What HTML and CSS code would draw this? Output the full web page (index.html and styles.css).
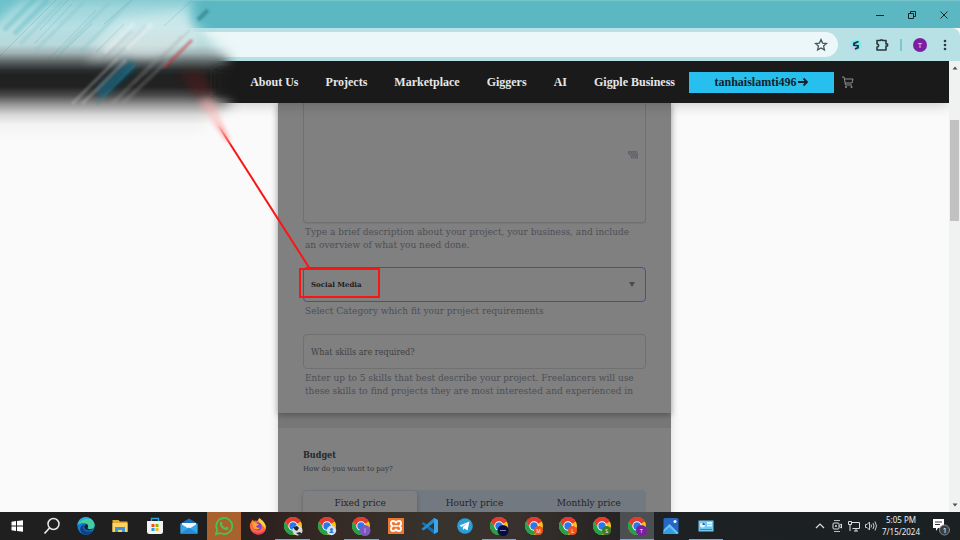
FILE: index.html
```
<!DOCTYPE html>
<html lang="en">
<head>
<meta charset="utf-8">
<meta name="viewport" content="width=device-width, initial-scale=1">
<title>Gigple - Post a project</title>
<link rel="stylesheet" href="styles.css">
</head>
<body>
<svg class="defs" aria-hidden="true">
  <defs>
    <symbol id="chrome" viewBox="0 0 20 20">
      <circle cx="10" cy="10" r="9" fill="#fbc116"/>
      <path d="M10 10 2.2 5.5A9 9 0 0 1 17.8 5.5Z" fill="#e33b2e"/>
      <path d="M10 5.5h7.8A9 9 0 0 0 2.2 5.5L6 12Z" fill="#e33b2e"/>
      <path d="M2.2 5.5A9 9 0 0 0 10 19l4-6.8-8 0Z" fill="#27a04b"/>
      <circle cx="10" cy="10" r="4.7" fill="#fff"/>
      <circle cx="10" cy="10" r="3.7" fill="#2878ec"/>
    </symbol>
  </defs>
</svg>

<div class="titlebar">
  <button class="win" aria-label="Minimize"><svg viewBox="0 0 12 12"><path d="M2 6.500h8"/></svg></button>
  <button class="win" aria-label="Restore"><svg viewBox="0 0 12 12"><path d="M2.500 4.500h5v5h-5zM4.500 4.500v-2h5v5h-2"/></svg></button>
  <button class="win" aria-label="Close"><svg viewBox="0 0 12 12"><path d="M2.500 2.500l7 7M9.500 2.500l-7 7"/></svg></button>
</div>

<div class="toolbar">
  <div class="address">
    <button class="tool" aria-label="Bookmark"><svg viewBox="0 0 16 16"><path d="M8 2.600l1.600 3.500 3.900.4-2.900 2.600.8 3.800L8 11l-3.400 1.900.8-3.800-2.900-2.600 3.900-.4z" fill="none" stroke="#4a5658" stroke-width="1.300"/></svg></button>
  </div>
  <button class="tool ext" aria-label="Extension"><svg viewBox="0 0 16 16"><circle cx="8" cy="8" r="5.500" fill="#7feaf2"/><path d="M3 10a5.500 5.500 0 0 0 5 3.500L8 8z" fill="#d4c2f4"/><path d="M10.500 4.500L6 6.300v2l4 .4v2L7 12" fill="none" stroke="#143238" stroke-width="1.800"/></svg></button>
  <button class="tool puzzle" aria-label="Extensions"><svg viewBox="0 0 16 16"><path d="M3 3.500h3.500V3h2v.5H12V7h1.500v2H12v4H3v-3c2.200 0 2.200-3 0-3z" fill="none" stroke="#26383a" stroke-width="1.600" stroke-linejoin="round"/></svg></button>
  <span class="divider"></span>
  <button class="avatar" aria-label="Profile">T</button>
  <button class="tool dots" aria-label="Menu"><svg viewBox="0 0 16 16"><g fill="#2c3b3d"><circle cx="8" cy="4" r="1.300"/><circle cx="8" cy="8" r="1.300"/><circle cx="8" cy="12" r="1.300"/></g></svg></button>
</div>

<div class="viewport">
  <div class="page">
    <header class="site-header">
      <nav class="nav">
        <a href="#">About Us</a>
        <a href="#">Projects</a>
        <a href="#">Marketplace</a>
        <a href="#">Giggers</a>
        <a href="#">AI</a>
        <a href="#">Gigple Business</a>
      </nav>
      <button class="account">tanhaislamti496<svg viewBox="0 0 12 10"><path d="M1 5h9M6.500 1.500L10 5 6.500 8.500" fill="none" stroke="#10222b" stroke-width="1.800"/></svg></button>
      <a class="cart" href="#" aria-label="Cart"><svg viewBox="0 0 14 14"><path d="M1 2h2l1.500 8H11M3.300 4H12l-1 4H4" fill="none" stroke="#8b8e96" stroke-width="1"/><circle cx="5" cy="12" r="1" fill="#8b8e96"/><circle cx="10.500" cy="12" r="1" fill="#8b8e96"/></svg></a>
    </header>

    <main class="form-column">
      <form class="form">
        <section class="card details">
          <div class="area">
            <textarea id="desc" aria-label="Project description"></textarea>
            <svg class="keys" viewBox="0 0 10 8" aria-hidden="true"><path d="M0 0h9v1.500h1V7.500H3V5.500H2V3.500H0z" fill="#63656a"/><path d="M2 2h7M3 4h6M4 6h5" stroke="#7d7d7f" stroke-dasharray="1 1"/></svg>
          </div>
          <label class="help" for="desc">Type a brief description about your project, your business, and include<br>an overview of what you need done.</label>
          <div class="select-wrap">
            <select id="category"><option>Social Media</option></select>
            <svg class="caret" viewBox="0 0 6 5" aria-hidden="true"><path d="M0 0h6L3 5z" fill="#4b4b4d"/></svg>
            <svg class="callout" viewBox="0 0 200 200" aria-hidden="true">
              <defs>
                <linearGradient id="tail" gradientUnits="userSpaceOnUse" x1="30" y1="8" x2="57" y2="51"><stop offset="0" stop-color="#f99" stop-opacity="0"/><stop offset=".5" stop-color="#ff8080" stop-opacity=".4"/><stop offset="1" stop-color="#fa1515" stop-opacity=".5"/></linearGradient>
                <linearGradient id="start" gradientUnits="userSpaceOnUse" x1="44" y1="30" x2="57" y2="51"><stop offset="0" stop-color="#fa1515" stop-opacity="0"/><stop offset="1" stop-color="#fa1515"/></linearGradient>
                <filter id="haze"><feGaussianBlur stdDeviation="2"/></filter>
              </defs>
              <path d="M22 8L38 4 56 46 53 46z" fill="url(#tail)" filter="url(#haze)"/>
              <path d="M44 30L136 174" fill="none" stroke="url(#start)" stroke-width="2"/>
              <path d="M126 174h79v28h-79z" fill="none" stroke="#fa1515" stroke-width="2"/>
            </svg>
          </div>
          <label class="help" for="category">Select Category which fit your project requirements</label>
          <input id="skills" class="skills" type="text" placeholder="What skills are required?">
          <label class="help" for="skills">Enter up to 5 skills that best describe your project. Freelancers will use<br>these skills to find projects they are most interested and experienced in</label>
        </section>
        <section class="card budget">
          <h2>Budget</h2>
          <p>How do you want to pay?</p>
          <div class="tabs">
            <button type="button" class="tab on">Fixed price</button>
            <button type="button" class="tab">Hourly price</button>
            <button type="button" class="tab">Monthly price</button>
          </div>
        </section>
      </form>
    </main>
  </div>
  <div class="scrollbar" aria-hidden="true">
    <svg viewBox="0 0 10 10"><path d="M2.500 6.500h5L5 3.500z" fill="#505050"/></svg>
    <span class="thumb"></span>
    <svg viewBox="0 0 10 10"><path d="M2.500 3.500h5L5 6.500z" fill="#505050"/></svg>
  </div>
</div>

<footer class="taskbar">
  <div class="apps">
    <button aria-label="Start"><svg viewBox="0 0 20 20"><path d="M4.500 5.700l4.500-.6v4.400H4.500zM10 5l6-.8v5.300h-6zM4.500 10.500H9v4.400l-4.500-.6zM10 10.500h6v5.300l-6-.8z" fill="#fff"/></svg></button>
    <button aria-label="Search"><svg viewBox="0 0 20 20"><circle cx="11.500" cy="8" r="5.500" fill="none" stroke="#e8e8e8" stroke-width="1.500"/><path d="M7.500 12l-5 5.500" stroke="#e8e8e8" stroke-width="1.700"/></svg></button>
    <button aria-label="Edge"><svg viewBox="0 0 20 20"><circle cx="10" cy="10" r="8.700" fill="#147bd1"/><path d="M1.500 9C3-.5 16-1 18.500 8c1 4.500-4 6-7 4.500 2-3 0-5.500-4-5.500-3 0-5 1-6 2z" fill="#43cfa0"/><path d="M1.500 9C3-.5 12 0 15 3 8 2 5 4 1.500 9z" fill="#26a9df"/><path d="M8 8.500c-2.500 5 2.500 9 9.500 6-3 5-10 5.500-12.500 1.500-2-3.500 0-7 3-7.500z" fill="#123f86"/><path d="M10.500 8c2 1 2 3 .8 4.300 2 1.300 5 1 6.200-.3-1 2.500-6.500 3.500-8.500 1-1.500-2-.5-4.500 1.500-5z" fill="#1d232a"/></svg></button>
    <button aria-label="File Explorer"><svg viewBox="0 0 20 20"><path d="M2.500 4h6l1.500 1.500h7.500V16h-15z" fill="#e9a92c"/><path d="M2.500 7h15v9h-15z" fill="#fbd468"/><path d="M5 16v-5h10v5h-3v-2H8v2z" fill="#3b94dc"/></svg></button>
    <button aria-label="Store"><svg viewBox="0 0 20 20"><path d="M6.500 5V2.500h7V5" fill="none" stroke="#2ba5d8" stroke-width="1.400"/><path d="M2 5h16v10.500q0 2.500-2.500 2.500h-11Q2 18 2 15.500z" fill="#f2f2f2"/><path d="M6.500 8h3v3h-3z" fill="#ef5125"/><path d="M10.500 8h3v3h-3z" fill="#7fb900"/><path d="M6.500 12h3v3h-3z" fill="#18a3ea"/><path d="M10.500 12h3v3h-3z" fill="#fcb813"/></svg></button>
    <button aria-label="Mail"><svg viewBox="0 0 20 20"><path d="M1.500 7.500L10 2.500l8.500 5v10h-17z" fill="#1770b8"/><path d="M3 7h14v6H3z" fill="#f5f9fc"/><path d="M1.500 7.500L10 13l8.500-5.500v10h-17z" fill="#36a6e8"/><path d="M1.500 17.500L10 11.500l8.500 6z" fill="#258dd8"/></svg></button>
    <button class="alert" aria-label="WhatsApp"><svg viewBox="0 0 20 20"><path d="M2 18.200l1.200-4.400a8 8 0 1 1 3.200 3.200z" fill="none" stroke="#45c452" stroke-width="1.700"/><path d="M6 6.500c1-1.500 2-1 2.500 1L8 8.800c1 1.500 1.700 2.200 3.300 3l1.200-1.200c2.500 1 2.500 1.400 1.300 2.800-2.800 2.500-9.300-3-7.800-6.900z" fill="#45c452"/></svg></button>
    <button aria-label="Firefox"><svg viewBox="0 0 20 20"><path d="M2 8L4.500 3.500 6 5q2-1 3 0l3-3c0 3 5 4 6 8 .8 4-2.500 8.500-7.500 8.500S1 14.500 2 8z" fill="#ff6936"/><path d="M11 2c4 2 8 7 6 11-1-3-3-4-5-6-2-1-2-3-1-5z" fill="#ffd13a"/><path d="M3 13c1 4 12 6 14.500-.5C17 16 14 18.500 10.500 18.500S4 16.500 3 13z" fill="#f43266"/><circle cx="9.500" cy="10.500" r="4" fill="#7b3fe0"/><path d="M4 6c4 0 6 2 7 3l-3 1c1 2 2 2 4 1.500-2 3.500-7 2-7-1.500z" fill="#ffa32c"/></svg></button>
    <button class="open" aria-label="Chrome 1"><svg viewBox="0 0 20 20"><use href="#chrome"/><circle cx="14.500" cy="14.500" r="5" fill="#d9dcdc"/><path d="M10 11l4-1 2 2-2 3-2-1zM13 17l4-1 2 2-3 1z" fill="#20282b"/></svg></button>
    <button aria-label="Chrome 2"><svg viewBox="0 0 20 20"><use href="#chrome"/><circle cx="14.500" cy="14.500" r="4.700" fill="#cce2fa"/><circle cx="14.500" cy="13.500" r="1.500" fill="#3675c5"/><path d="M12 17q2.500-4 5 0z" fill="#3675c5"/></svg></button>
    <button class="open" aria-label="Chrome 3"><svg viewBox="0 0 20 20"><use href="#chrome"/><circle cx="14" cy="14.500" r="5.500" fill="#7e57c2"/><path d="M14 12v5" stroke="#b9a1df"/></svg></button>
    <button aria-label="XAMPP"><svg viewBox="0 0 20 20"><path d="M2 2h16v16H2z" fill="#f3742b"/><path d="M5 7q0-2 2-2 2 0 3 1.500Q11 5 13 5q2 0 2 2v1.500L13.500 10 15 11.500V13q0 2-2 2-2 0-3-1.500Q9 15 7 15q-2 0-2-2v-1.500L6.500 10 5 8.500z" fill="none" stroke="#fff" stroke-width="1.800"/><path d="M7.500 10h5" stroke="#fff" stroke-width="1.600"/></svg></button>
    <button aria-label="Visual Studio Code"><svg viewBox="0 0 20 20"><path d="M14 2l4 2v12l-4 2L1.500 7.500 3.500 6 14 14z" fill="#1272b8"/><path d="M14 2v4.500L3.500 14.500l-2-1.500z" fill="#238dd4"/><path d="M14 2l4 2v12l-4 2z" fill="#39a7ee"/></svg></button>
    <button aria-label="Telegram"><svg viewBox="0 0 20 20"><circle cx="10" cy="10" r="7.800" fill="#2b9fd5"/><path d="M4.500 9.500l10-4-2 9-3-2-1.500 1.500-.2-3 4.700-4-6 4z" fill="#fff"/></svg></button>
    <button class="open" aria-label="Chrome 4"><svg viewBox="0 0 20 20"><use href="#chrome"/><circle cx="14" cy="14.500" r="5.500" fill="#070b40"/><path d="M11 14.500h6" stroke="#8285b6"/></svg></button>
    <button aria-label="Chrome 5"><svg viewBox="0 0 20 20"><use href="#chrome"/><circle cx="14.500" cy="14.500" r="4.500" fill="#f4511e"/><text x="14.500" y="16.500">M</text></svg></button>
    <button aria-label="Chrome 6"><svg viewBox="0 0 20 20"><use href="#chrome"/><circle cx="14.500" cy="14.500" r="4.500" fill="#f4511e"/><text x="14.500" y="16.500">L</text></svg></button>
    <button aria-label="Chrome 7"><svg viewBox="0 0 20 20"><use href="#chrome"/><circle cx="14.500" cy="14.500" r="4.500" fill="#3d7a29"/><text x="14.500" y="16.500">S</text></svg></button>
    <button class="active open" aria-label="Chrome 8"><svg viewBox="0 0 20 20"><use href="#chrome"/><circle cx="14.500" cy="14.500" r="5.500" fill="#7b1fa2"/><text x="14.500" y="16.500">T</text></svg></button>
    <button aria-label="Photos"><svg viewBox="0 0 20 20"><rect x="2.500" y="2" width="15" height="16" rx="1.500" fill="#2468c4"/><path d="M2.500 14l6-6 9 9-1 1h-14z" fill="#69c4f5"/><path d="M2.500 16l6-5 7 7h-13z" fill="#389de0"/><circle cx="14" cy="5.500" r="1.500" fill="#fff"/></svg></button>
    <button class="open" aria-label="Settings panel"><svg viewBox="0 0 20 20"><rect x="2.500" y="4.500" width="15" height="11" fill="#73c8f2"/><circle cx="6.500" cy="9" r="2.500" fill="#e8f5fb"/><path d="M6.500 9V6.500A2.500 2.500 0 0 1 9 9z" fill="#1870b5"/><path d="M11 7h5M11 9.500h5" stroke="#fff" stroke-width="1.300"/><path d="M4 13.500h12" stroke="#2d8bc7"/></svg></button>
  </div>
  <div class="tray">
    <svg viewBox="0 0 12 14"><path d="M2 9l4-4 4 4" fill="none" stroke="#ddd" stroke-width="1.200"/></svg>
    <svg viewBox="0 0 12 14"><path d="M3 1.500h6M3 12.500h6" stroke="#bbb"/><rect x="2" y="4" width="6" height="6" rx="1" fill="none" stroke="#ddd"/><circle cx="5" cy="7" r="1" fill="#ddd"/><path d="M8.500 6.500l2-1.500v4l-2-1.500" fill="none" stroke="#ddd"/></svg>
    <svg viewBox="0 0 12 14"><path d="M3.500 3.500h8v6h-7M6 12h4M8 9.500V12M.5 2.500h3v3h-3zM2 5.500V12" fill="none" stroke="#ddd"/></svg>
    <svg viewBox="0 0 12 14"><path d="M.5 5.500H2L4.500 3v8L2 8.500H.5zM6 5.500q1 1.500 0 3M8 4q2 3 0 6M10 2.500q3 4.500 0 9" fill="none" stroke="#ccc"/></svg>
    <time class="clock" datetime="2024-07-15T17:05"><span>5:05 PM</span><span>7/15/2024</span></time>
    <button class="notes" aria-label="1 notification"><svg viewBox="0 0 20 20"><path d="M2 3h11v9H7l-2 3v-3H2z" fill="#fff"/><path d="M4 6h7M4 8.500h5" stroke="#333"/><circle cx="13.500" cy="14" r="5" fill="#3b3d40" stroke="#888"/></svg><span>1</span></button>
  </div>
</footer>

<svg class="smear" viewBox="0 0 260 140" aria-hidden="true">
  <defs>
    <linearGradient id="bands" x1="0" y1="0" x2="0" y2="1">
      <stop offset="0" stop-color="#8accd3"/><stop offset=".06" stop-color="#9fd7dc"/><stop offset=".2" stop-color="#b6e0e4"/><stop offset=".32" stop-color="#b8d8da"/><stop offset=".38" stop-color="#9fb1b3"/><stop offset=".44" stop-color="#5e6667"/><stop offset=".5" stop-color="#2a2e2e"/><stop offset=".54" stop-color="#202121"/><stop offset=".62" stop-color="#222"/><stop offset=".68" stop-color="#4a4a4a"/><stop offset=".75" stop-color="#999"/><stop offset=".82" stop-color="#d8d8d8"/><stop offset=".89" stop-color="#f3f3f3"/><stop offset="1" stop-color="#fafafa"/>
    </linearGradient>
    <filter id="soft" filterUnits="userSpaceOnUse" x="-80" y="-80" width="400" height="320"><feGaussianBlur stdDeviation="6"/></filter>
    <filter id="mid" filterUnits="userSpaceOnUse" x="-40" y="-40" width="340" height="240"><feGaussianBlur stdDeviation="4"/></filter>
    <filter id="fine" filterUnits="userSpaceOnUse" x="-20" y="-20" width="300" height="180"><feGaussianBlur stdDeviation="1"/></filter>
    <mask id="feather" maskUnits="userSpaceOnUse" x="0" y="0" width="260" height="140"><path d="M-70-70H192V22L214 44 230 58 222 84 232 106 206 120 186 210H-70z" fill="#fff" filter="url(#soft)"/></mask>
  </defs>
  <g mask="url(#feather)">
    <path d="M0 0h260v140H0z" fill="url(#bands)"/>
    <path d="M-20-20H38L-20 40z" fill="#5fbcc6" opacity=".7" filter="url(#mid)"/>
    <path d="M90 46L120 18l70-8 8 34-50 10z" fill="#e2f2f3" opacity=".5" filter="url(#mid)"/>
    <path d="M84 62L112 36l74-4-12 26z" fill="#d5dcdc" opacity=".4" filter="url(#mid)"/>
    <path d="M214 68h60v28h-60z" fill="#1a1a1a" filter="url(#mid)"/>
    <path d="M180 72h22l12 24-18 2z" fill="#701515" opacity=".35" filter="url(#mid)"/>
    <path d="M198 102l14-4 10 22-6 4z" fill="#ffabab" opacity=".6" filter="url(#mid)"/>
    <g fill="none" filter="url(#fine)">
      <path d="M100 92L132 64" stroke="#176a86" stroke-width="12" opacity=".5" filter="url(#mid)"/>
      <path d="M98 94L132 64" stroke="#176a86" stroke-width="8" opacity=".5" filter="url(#fine)"/>
      <path d="M96 104L136 64" stroke="#278bad" stroke-width="2" opacity=".4"/>
      <path d="M72 104L118 58M82 104L126 60" stroke="#d7d7d7" stroke-width="3" opacity=".3"/>
      <path d="M112 104L160 56M122 104L168 60" stroke="#a9a9a9" stroke-width="4" opacity=".25"/>
      <path d="M134 84L182 36M144 76L190 30M100 62L132 30M112 60L146 26" stroke="#777" stroke-width="2" opacity=".2"/>
      <path d="M164 68L192 40" stroke="#c92727" stroke-width="3" opacity=".5"/>
      <path d="M104 52L134 24M126 48L152 24" stroke="#fff" stroke-width="5" opacity=".25"/>
      <path d="M4 30L36-2M14 34L48 0" stroke="#4fb3be" stroke-width="5" opacity=".35"/>
      <path d="M20 44L64 0M36 50L84 2M58 54L110 2M80 52L130 2" stroke="#84bcc2" stroke-width="3" opacity=".35"/>
    </g>
    <path d="M0 56L56 0M34 44L72 4M48 60L96 10M56 58L92 24M104 24L132 0M124 24L96 52M164 26L192 0M40 30L68 0" fill="none" stroke="#397e86" stroke-width="1" opacity=".2"/>
  </g>
  <path d="M198 20L208 10" stroke="#246c76" stroke-width="4" opacity=".5" filter="url(#fine)"/>
</svg>
</body>
</html>
```
FILE: styles.css
```
* { box-sizing: border-box; }
html, body { height: 100%; }
body {
  margin: 0;
  display: flex;
  flex-direction: column;
  overflow: hidden;
  position: relative;
  background: #fafafa;
  font-family: "DejaVu Serif", serif;
}
button { border: 0; padding: 0; background: none; font-family: inherit; }
svg { display: block; }
.defs { position: absolute; width: 0; height: 0; }

/* Browser chrome */
.titlebar {
  flex: 0 0 28px;
  display: flex;
  justify-content: flex-end;
  align-items: center;
  gap: 20px;
  padding-right: 10px;
  background: #5bb8c2;
  border-top: 1px solid #76c5cd;
}
.win svg { width: 12px; height: 12px; fill: none; stroke: #18282a; }
.toolbar {
  flex: 0 0 33px;
  display: flex;
  align-items: center;
  padding: 4px 7px 4px 80px;
  background: #b7e1e5;
  border-top-right-radius: 8px;
}
.address {
  flex: 1;
  height: 25px;
  display: flex;
  justify-content: flex-end;
  align-items: center;
  padding-right: 9px;
  margin-right: 10px;
  border-radius: 13px;
  background: #ebf7f8;
}
.tool svg { width: 16px; height: 16px; }
.puzzle { margin-left: 10px; }
.divider { width: 2px; height: 12px; margin: 0 11px 0 10px; background: #79c9d1; }
.avatar {
  width: 14px;
  height: 14px;
  border-radius: 50%;
  background: #7b1fa2;
  color: #eee;
  font: 8px/14px "Open Sans", sans-serif;
}
.dots { margin-left: 10px; }

/* Page */
.viewport { flex: 1; min-height: 0; display: flex; }
.page { flex: 1; min-width: 0; display: flex; flex-direction: column; overflow: hidden; }
.site-header {
  position: relative;
  z-index: 2;
  flex: 0 0 42px;
  display: flex;
  align-items: center;
  justify-content: flex-end;
  padding-right: 94px;
  background: #1a1a1a;
  box-shadow: 0 2px 14px rgba(0, 0, 0, .2);
}
.nav { display: flex; gap: 27px; margin-right: 14px; }
.nav a, .account {
  font-family: "Liberation Serif", serif;
  font-size: 12px;
  font-weight: 700;
}
.nav a { color: #e6e6e6; text-decoration: none; white-space: nowrap; }
.account {
  width: 145px;
  height: 21px;
  display: flex;
  align-items: center;
  justify-content: center;
  background: #27bfee;
  color: #10222b;
}
.account svg { width: 12px; height: 10px; }
.cart { margin-left: 7px; }
.cart svg { width: 14px; height: 14px; }

.form-column { flex: 1; min-height: 0; display: flex; justify-content: center; }
.form { width: 393px; background: #777; box-shadow: 0 0 8px rgba(0, 0, 0, .15); height: max-content; }
.card { background: #808080; padding: 0 25px; }
.details { padding-bottom: 15px; box-shadow: 0 2px 6px rgba(0, 0, 0, .3); margin-bottom: 15px; }
.area, .select-wrap { position: relative; }
textarea, select, .skills {
  display: block;
  width: 100%;
  border: 1px solid #707071;
  border-radius: 4px;
  background: transparent;
  outline: 0;
  resize: none;
}
textarea { height: 120px; border-top: 0; border-radius: 0 0 4px 4px; box-shadow: 0 1px 1px #777; }
.keys { position: absolute; right: 8px; top: 48px; width: 10px; height: 8px; }
.help {
  display: block;
  padding: 3px 0 0 2px;
  white-space: nowrap;
  font-size: 9px;
  line-height: 13px;
  color: #4d4f56;
}
.select-wrap { margin-top: 15px; }
select {
  height: 35px;
  padding: 0 7px;
  border-color: #4c4ca4;
  appearance: none;
  font: 700 7px "DejaVu Serif", serif;
  color: #1c1c1c;
}
.caret { position: absolute; right: 11px; top: 15px; width: 6px; height: 5px; }
.callout { position: absolute; left: -129px; top: -172px; width: 200px; height: 200px; overflow: visible; pointer-events: none; }
.skills {
  height: 35px;
  margin-top: 16px;
  padding: 0 7px;
  font: 9px "DejaVu Serif Condensed", "DejaVu Serif", serif;
}
.skills::placeholder { color: #3f4042; opacity: 1; }
.budget { padding-top: 20px; }
.budget h2, .budget p { margin: 0; color: #24262d; }
.budget h2 { font: 700 9px/14px "DejaVu Serif Condensed", "DejaVu Serif", serif; }
.budget p { font-size: 7px; line-height: 14px; color: #33353b; }
.tabs {
  display: flex;
  height: 30px;
  margin-top: 14px;
  padding-top: 1px;
  border-radius: 4px 4px 0 0;
  background: #727980;
}
.tab { flex: 1; padding-bottom: 6px; font-size: 9px; font-weight: 400; color: #22252c; }
.on { background: #808080; border-radius: 4px; box-shadow: 0 2px 4px rgba(0, 0, 0, .25); }

.scrollbar {
  flex: 0 0 11px;
  display: flex;
  flex-direction: column;
  align-items: center;
  padding: 2px 0;
  background: #f0f1f1;
}
.scrollbar svg { width: 10px; height: 10px; }
.thumb { width: 9px; height: 101px; margin: 47px 0 auto; background: #c1c1c1; }

/* Taskbar */
.taskbar {
  flex: 0 0 28px;
  display: flex;
  justify-content: space-between;
  background: linear-gradient(90deg, #1f1f20 0 22%, #2c211e 27%, #352a25 35%, #38332d 45%, #38312d 54%, #272424 63%, #1d2123 70%, #1b2023);
}
.apps { flex: 0 1 723px; display: grid; grid-template-columns: repeat(21, 1fr); }
.apps button { display: flex; align-items: center; justify-content: center; }
.apps svg { width: 20px; height: 20px; }
.apps text { font: 5px "Open Sans", sans-serif; fill: #fff; text-anchor: middle; }
.apps .alert { background: #a9622c; }
.apps .active { background: #4c4f51; }
.apps .open { box-shadow: inset 0 -1px #76a9c8; }
.tray { display: flex; align-items: center; gap: 5px; padding-right: 9px; }
.tray > svg { width: 12px; height: 14px; }
.clock {
  display: flex;
  flex-direction: column;
  align-items: center;
  font: 8px/12px "Noto Sans", "Open Sans", sans-serif;
  color: #eee;
}
.notes { position: relative; margin-left: 6px; }
.notes svg { width: 20px; height: 20px; }
.notes span { position: absolute; right: 4px; bottom: 1px; font: 8px/10px "Open Sans", sans-serif; color: #fff; }

.smear { position: absolute; left: 0; top: 0; width: 260px; height: 140px; pointer-events: none; z-index: 5; }
```
